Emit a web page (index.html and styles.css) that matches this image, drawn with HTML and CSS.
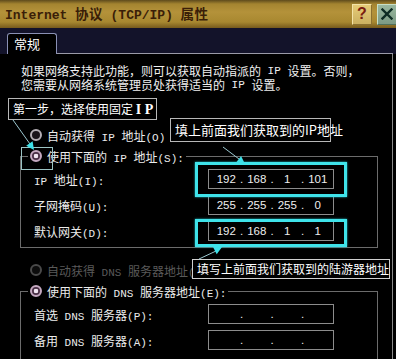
FILE: index.html
```html
<!DOCTYPE html>
<html lang="zh-CN">
<head>
<meta charset="utf-8">
<title>Internet 协议 (TCP/IP) 属性</title>
<link rel="stylesheet" href="styles.css">
</head>
<body>
<div class="window">
  <div class="titlebar">
    <div class="title"><span class="t-en">Internet</span> 协议 <span class="t-en">(TCP/IP)</span> 属性</div>
    <div class="tbtns">
      <span class="tbtn help">?</span>
      <span class="tbtn close"><svg width="12" height="12" viewBox="0 0 12 12"><path d="M1.5 1.5 L10.5 10.5 M10.5 1.5 L1.5 10.5" stroke="#0e2c24" stroke-width="2.4" stroke-linecap="square"/></svg></span>
    </div>
  </div>
  <div class="tabs">
    <div class="tab">常规</div>
    <div class="tab-fill"></div>
  </div>
  <div class="panel">
    <p class="intro"><span class="line">如果网络支持此功能，则可以获取自动指派的<span class="en"> IP </span>设置。否则，</span><span class="line">您需要从网络系统管理员处获得适当的<span class="en"> IP </span>设置。</span></p>
    <div class="note note1">第一步，选择使用固定 <b>I P</b></div>
    <div class="radio-row"><span class="radio"></span><span>自动获得<span class="en"> IP </span>地址<span class="en">(O)</span></span></div>
    <div class="group">
      <div class="radio-row legend"><span class="radio on"></span><span>使用下面的<span class="en"> IP </span>地址<span class="en">(S):</span></span></div>
      <div class="field">
        <span class="label"><span class="en">IP </span>地址<span class="en">(I):</span></span>
        <div class="ip"><span class="seg">192</span><span class="dot">.</span><span class="seg">168</span><span class="dot">.</span><span class="seg">1</span><span class="dot">.</span><span class="seg">101</span></div>
      </div>
      <div class="field">
        <span class="label">子网掩码<span class="en">(U):</span></span>
        <div class="ip"><span class="seg">255</span><span class="dot">.</span><span class="seg">255</span><span class="dot">.</span><span class="seg">255</span><span class="dot">.</span><span class="seg">0</span></div>
      </div>
      <div class="field">
        <span class="label">默认网关<span class="en">(D):</span></span>
        <div class="ip"><span class="seg">192</span><span class="dot">.</span><span class="seg">168</span><span class="dot">.</span><span class="seg">1</span><span class="dot">.</span><span class="seg">1</span></div>
      </div>
    </div>
    <div class="radio-row disabled"><span class="radio"></span><span>自动获得<span class="en"> DNS </span>服务器地址<span class="en">(B)</span></span></div>
    <div class="group group-dns">
      <div class="radio-row legend"><span class="radio on"></span><span>使用下面的<span class="en"> DNS </span>服务器地址<span class="en">(E):</span></span></div>
      <div class="field">
        <span class="label">首选<span class="en"> DNS </span>服务器<span class="en">(P):</span></span>
        <div class="ip"><span class="seg"></span><span class="dot">.</span><span class="seg"></span><span class="dot">.</span><span class="seg"></span><span class="dot">.</span><span class="seg"></span></div>
      </div>
      <div class="field">
        <span class="label">备用<span class="en"> DNS </span>服务器<span class="en">(A):</span></span>
        <div class="ip"><span class="seg"></span><span class="dot">.</span><span class="seg"></span><span class="dot">.</span><span class="seg"></span><span class="dot">.</span><span class="seg"></span></div>
      </div>
    </div>
  </div>

  <div class="hl-radio"></div>
  <div class="hl hl-ip"></div>
  <div class="hl hl-gw"></div>
  <div class="note note2">填上前面我们获取到的IP地址</div>
  <div class="note note3">填写上前面我们获取到的陆游器地址</div>
  <svg class="arrows" width="396" height="359" viewBox="0 0 396 359">
    <line x1="13" y1="120" x2="30" y2="144" stroke="#9cc8d0" stroke-width="1"/>
    <polygon points="34,150 32.6,141.2 26.2,145.8" fill="#3ee0e8"/>
    <line x1="223" y1="147" x2="239" y2="159" stroke="#9cc8d0" stroke-width="1"/>
    <polygon points="245,164 241.1,155.9 236.3,162.3" fill="#3ee0e8"/>
    <line x1="199" y1="259" x2="216" y2="251" stroke="#9cc8d0" stroke-width="1"/>
    <polygon points="222,247 216.7,254.3 213.1,247.1" fill="#3ee0e8"/>
  </svg>
</div>
</body>
</html>
```

FILE: styles.css
```css
* { box-sizing: border-box; }

html, body {
  margin: 0;
  padding: 0;
  background: #000;
}

body {
  width: 396px;
  height: 359px;
  overflow: hidden;
  font-family: "Noto Sans CJK SC", sans-serif;
}

.window {
  position: relative;
  width: 396px;
  height: 359px;
  background: #000;
  overflow: hidden;
  display: flex;
  flex-direction: column;
}

/* title bar */
.titlebar {
  height: 28px;
  flex: none;
  display: flex;
  align-items: center;
  justify-content: space-between;
  padding-left: 5px;
  background: linear-gradient(#5e4a1c 0, #a48430 4px, #b4923a 12px, #a88830 22px, #765a1c 28px);
}

.title {
  font-family: "Noto Sans CJK SC", sans-serif;
  font-size: 13.5px;
  font-weight: 700;
  color: #3a1e08;
  white-space: pre;
  letter-spacing: 0.5px;
  word-spacing: 4px;
  line-height: 20px;
}

.t-en {
  font-family: "Liberation Mono", monospace;
  font-size: 13px;
  font-weight: 700;
  letter-spacing: 0;
}

.tbtns {
  display: flex;
  gap: 5px;
  margin-right: -1px;
}

.tbtn {
  width: 20px;
  height: 21px;
  display: flex;
  align-items: center;
  justify-content: center;
  border: 1px solid;
}

.help {
  background: linear-gradient(#e6cc78, #cbb060);
  border-color: #f3e3a8 #8a7030 #8a7030 #f3e3a8;
  color: #7a1c10;
  font-family: "Liberation Sans", sans-serif;
  font-weight: 700;
  font-size: 16px;
}

.close {
  background: linear-gradient(#9ab8a0, #7c9a84);
  border-color: #c8e0c8 #50705a #50705a #c8e0c8;
}

/* tabs */
.tabs {
  height: 26px;
  flex: none;
  display: flex;
  align-items: flex-end;
  background: #13132a;
  padding-left: 7px;
}

.tab {
  width: 50px;
  height: 21px;
  background: #000;
  border: 1px solid #8a90b4;
  border-bottom: none;
  border-radius: 3px 3px 0 0;
  color: #fff;
  font-size: 13px;
  line-height: 20px;
  padding-left: 6px;
}

.tab-fill {
  width: 336px;
  flex: none;
  border-bottom: 1px solid #9a9aa8;
}

/* panel */
.panel {
  flex: 1;
  width: 393px;
  background: #000;
  border-right: 1px solid #8a8a8a;
  color: #f0f0f0;
  font-size: 12px;
}

.en {
  font-family: "Liberation Mono", monospace;
  font-size: 11px;
  line-height: 0;
}

.intro {
  margin: 10px 0 0 21px;
  height: 28px;
  white-space: nowrap;
}

.intro .line {
  display: flex;
  align-items: center;
  height: 14px;
  line-height: 14px;
}

.intro .line .en {
  white-space: pre;
}

.note {
  background: #000;
  color: #fff;
  border: 1px solid #b8b8b8;
  white-space: nowrap;
}

.note1 {
  margin: 6px 0 0 8px;
  width: fit-content;
  height: 22px;
  padding: 0 3px 0 4px;
  line-height: 20px;
  font-size: 12px;
}

.note1 b {
  font-family: "Liberation Serif", serif;
  font-size: 14px;
  font-weight: 700;
  line-height: 0;
}

.radio-row {
  display: flex;
  align-items: center;
  gap: 5px;
  height: 20px;
  padding-left: 30px;
  margin-top: 5px;
  white-space: nowrap;
  color: #ececec;
}

.radio {
  width: 12px;
  height: 12px;
  flex: none;
  border-radius: 50%;
  border: 2px solid #b4aeb4;
  background: #1a141a;
}

.radio.on {
  border-color: #c4a8c0;
  background: radial-gradient(circle, #f0e4f0 0 2px, #4a3046 2.6px);
}

.disabled {
  color: #5a5a5a;
  margin-top: 12px;
}

.disabled .radio {
  border-color: #4a4a4a;
  background: #0c0c0c;
}

.group {
  margin: 11px 0 0 20px;
  width: 358px;
  border: 1px solid #6c6c6c;
  padding-bottom: 3px;
}

.group-dns {
  padding-bottom: 20px;
}

.group .legend {
  margin: -11px 0 0 7px;
  padding: 0 2px;
  width: fit-content;
  background: #000;
}

.field {
  display: grid;
  grid-template-columns: 174px 126px;
  align-items: center;
  height: 26px;
  padding-left: 13px;
  white-space: nowrap;
  color: #ececec;
}

.ip {
  height: 20px;
  border: 1px solid #8c8c8c;
  display: flex;
  align-items: center;
  padding-left: 5px;
  font-family: "Liberation Sans", sans-serif;
  font-size: 11.5px;
  color: #eeeeee;
}

.ip .seg {
  width: 24.5px;
  text-align: center;
}

.ip .dot {
  width: 6px;
  text-align: center;
}

/* annotations laid over the dialog */
.hl-radio {
  position: absolute;
  left: 21px;
  top: 147px;
  width: 32px;
  height: 23px;
  border: 1px solid #9cc4c4;
}

.hl {
  position: absolute;
  left: 195px;
  width: 152px;
  border: 3px solid #3fe3ea;
  box-shadow: 0 0 2px #20b8c0;
}

.hl-ip {
  top: 162px;
  height: 35px;
}

.hl-gw {
  top: 219px;
  height: 28px;
}

.note2 {
  position: absolute;
  left: 170px;
  top: 118px;
  width: 161px;
  height: 24px;
  padding-left: 4px;
  line-height: 22px;
  font-size: 13px;
}

.note3 {
  position: absolute;
  left: 192px;
  top: 259px;
  width: 198px;
  height: 20px;
  padding-left: 4px;
  line-height: 18px;
  font-size: 12px;
  border-color: #d0d0d0;
}

.arrows {
  position: absolute;
  left: 0;
  top: 0;
  pointer-events: none;
}
```
